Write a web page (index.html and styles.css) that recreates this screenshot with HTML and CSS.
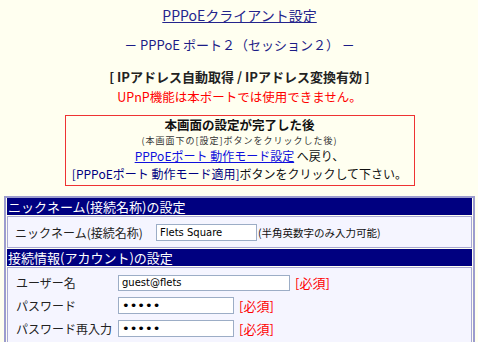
FILE: index.html
```html
<!DOCTYPE html>
<html lang="ja">

<head>
  <meta charset="UTF-8" />
  <title>PPPoEクライアント設定</title>
  <link rel="stylesheet" href="styles.css">
</head>

<body>
  <div class="page">
    <h1 class="title"><a href="#">PPPoEクライアント設定</a></h1>
    <p class="port">－ PPPoE ポート２（セッション２） －</p>
    <p class="mode">[ IPアドレス自動取得 / IPアドレス変換有効 ]</p>
    <p class="warn">UPnP機能は本ポートでは使用できません。</p>

    <div class="notice">
      <div class="notice-head">本画面の設定が完了した後</div>
      <div class="notice-sub">(本画面下の[設定]ボタンをクリックした後)</div>
      <div class="notice-line"><a href="#" class="mode-link">PPPoEポート 動作モード設定</a> へ戻り、</div>
      <div class="notice-line"><span class="apply">[PPPoEポート 動作モード適用]</span>ボタンをクリックして下さい。</div>
    </div>

    <div class="settings">
      <div class="sec-head">ニックネーム(接続名称)の設定</div>
      <div class="sec-body nick">
        <span class="label">ニックネーム(接続名称)</span>
        <input class="field nick-field" type="text" value="Flets Square">
        <span class="hint">(半角英数字のみ入力可能)</span>
      </div>

      <div class="sec-head">接続情報(アカウント)の設定</div>
      <div class="sec-body account">
        <span class="label">ユーザー名</span>
        <div class="cell">
          <input class="field user-field" type="text" value="guest@flets">
          <span class="req">[必須]</span>
        </div>
        <span class="label">パスワード</span>
        <div class="cell">
          <input class="field pass-field" type="password" value="aaaaa">
          <span class="req">[必須]</span>
        </div>
        <span class="label">パスワード再入力</span>
        <div class="cell">
          <input class="field pass-field" type="password" value="aaaaa">
          <span class="req">[必須]</span>
        </div>
      </div>
    </div>
  </div>
</body>

</html>
```

FILE: styles.css
```css
* {
  box-sizing: border-box;
}

body {
  margin: 0;
  background: #fffff0;
  font-family: "Noto Sans CJK JP", sans-serif;
  font-size: 13px;
  color: #111;
}

.page {
  padding: 7px 3px 0 4px;
}

.title {
  margin: 0;
  text-align: center;
  font-size: 14px;
  font-weight: normal;
  line-height: 16px;
}

.title a {
  color: #24248c;
  text-decoration: underline;
}

.port {
  margin: 14px 0 0;
  text-align: center;
  line-height: 16px;
  color: #1c1c86;
}

.mode {
  margin: 14px 0 0;
  text-align: center;
  line-height: 20px;
  font-weight: bold;
  color: #222;
}

.warn {
  margin: 0;
  text-align: center;
  line-height: 20px;
  font-size: 12.5px;
  color: #ff0000;
}

/* notice box */
.notice {
  width: 350px;
  margin: 8px auto 0;
  border: 1px solid #ee3333;
  padding: 1px 0 2px;
  text-align: center;
  font-size: 12px;
}

.notice-head {
  font-size: 12.5px;
  font-weight: bold;
  line-height: 15px;
}

.notice-sub {
  margin-top: 2px;
  font-size: 9px;
  line-height: 13px;
  letter-spacing: 1px;
  color: #333;
}

.notice-line {
  line-height: 18px;
}

.mode-link {
  color: #1010dd;
  text-decoration: underline;
}

.apply {
  color: #000080;
}

/* settings table */
.settings {
  margin-top: 10px;
  border: 2px solid #9c9cce;
  padding: 0 1px;
  display: flex;
  flex-direction: column;
  gap: 1px;
}

.sec-head {
  background: #000080;
  color: #fff;
  font-size: 13px;
  line-height: 17px;
  padding-left: 1px;
}

.sec-body {
  background: #f5f5ff;
  border: 1px solid #a8a8d2;
}

.nick {
  display: flex;
  align-items: center;
  height: 32px;
  padding-left: 7px;
}

.nick .label {
  width: 141px;
  font-size: 12px;
  color: #222;
}

.hint {
  margin-left: 1px;
  font-size: 10.5px;
}

.account {
  display: grid;
  grid-template-columns: 102px auto;
  grid-auto-rows: 23px;
  align-items: center;
  padding: 3px 0 4px 8px;
}

.account .label {
  font-size: 12px;
  color: #222;
}

.cell {
  display: flex;
  align-items: center;
  gap: 5px;
}

.field {
  margin: 0;
  height: 17px;
  border: 1px solid #9cadc6;
  background: #fff;
  font-family: "DejaVu Sans", sans-serif;
  font-size: 10px;
  padding: 0 3px;
  color: #000;
}

.nick-field {
  width: 101px;
}

.user-field {
  width: 172px;
  height: 16px;
}

.pass-field {
  width: 116px;
  font-size: 13px;
}

.req {
  color: #ff0000;
  font-size: 13px;
}
```
